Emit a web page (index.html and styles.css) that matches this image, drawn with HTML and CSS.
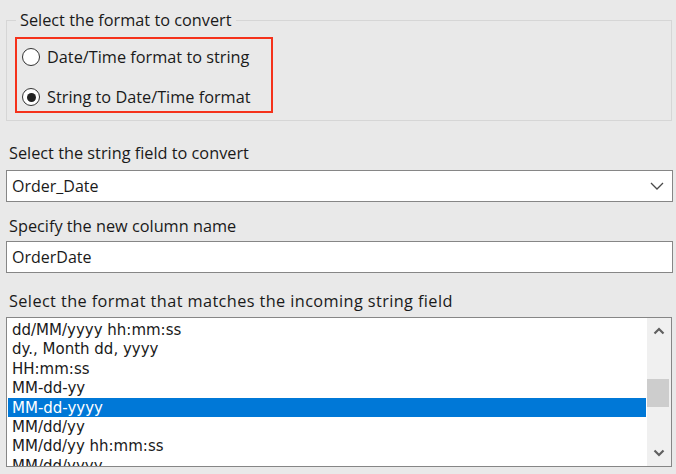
FILE: index.html
```html
<!DOCTYPE html>
<html>
<head>
<meta charset="utf-8">
<link rel="stylesheet" href="styles.css">
</head>
<body>
<div class="page">
  <fieldset class="group">
    <legend class="group-title">Select the format to convert</legend>
    <div class="highlight-box">
      <label class="radio-row">
        <span class="radio"></span>
        <span class="radio-text">Date/Time format to string</span>
      </label>
      <label class="radio-row">
        <span class="radio checked"><span class="dot"></span></span>
        <span class="radio-text">String to Date/Time format</span>
      </label>
    </div>
  </fieldset>

  <div class="label label-1">Select the string field to convert</div>
  <div class="combo">
    <span class="field-text">Order_Date</span>
    <svg class="chevron" width="14" height="8" viewBox="0 0 14 8"><path d="M1 1 L7 7 L13 1" fill="none" stroke="#4a4a4a" stroke-width="1.3"/></svg>
  </div>

  <div class="label label-2">Specify the new column name</div>
  <div class="textbox"><span class="field-text">OrderDate</span></div>

  <div class="label label-3">Select the format that matches the incoming string field</div>
  <div class="listbox">
    <div class="items">
      <div class="item">dd/MM/yyyy hh:mm:ss</div>
      <div class="item">dy., Month dd, yyyy</div>
      <div class="item">HH:mm:ss</div>
      <div class="item">MM-dd-yy</div>
      <div class="item selected">MM-dd-yyyy</div>
      <div class="item">MM/dd/yy</div>
      <div class="item">MM/dd/yy hh:mm:ss</div>
      <div class="item">MM/dd/yyyy</div>
    </div>
    <div class="scrollbar">
      <svg class="arrow" width="12" height="8" viewBox="0 0 12 8"><path d="M1.5 6.5 L6 2 L10.5 6.5" fill="none" stroke="#606060" stroke-width="2.2"/></svg>
      <div class="track"><div class="thumb"></div></div>
      <svg class="arrow" width="12" height="8" viewBox="0 0 12 8"><path d="M1.5 1.5 L6 6 L10.5 1.5" fill="none" stroke="#606060" stroke-width="2.2"/></svg>
    </div>
  </div>
</div>
</body>
</html>
```
FILE: styles.css
```css
html, body {
  margin: 0;
  padding: 0;
  background: #e9e9e9;
}
body {
  font-family: "Open Sans", "Noto Sans", sans-serif;
  font-size: 16.3px;
  color: #1a1a1a;
  width: 676px;
  height: 474px;
  overflow: hidden;
}
.page {
  padding: 11px 0 0 6px;
  width: 667px;
}
.group {
  margin: 0;
  width: 666px;
  box-sizing: border-box;
  border: 1px solid #d6d6d6;
  padding: 0 8px 7px 8px;
}
.group-title {
  margin-left: 1px;
  padding: 0 4px;
  line-height: 18px;
  height: 18px;
}
.highlight-box {
  margin-top: 8px;
  width: 258px;
  box-sizing: border-box;
  border: 2px solid #f5321b;
  padding: 8px 0 4px 5px;
  display: flex;
  flex-direction: column;
  gap: 20px;
}
.radio-row {
  display: flex;
  align-items: center;
  height: 20px;
  gap: 7px;
}
.radio {
  width: 16px;
  height: 16px;
  border: 1.5px solid #333;
  border-radius: 50%;
  background: #fff;
  display: flex;
  align-items: center;
  justify-content: center;
  flex: none;
}
.radio .dot {
  width: 9px;
  height: 9px;
  border-radius: 50%;
  background: #222;
}
.label {
  line-height: 20px;
  padding-left: 3px;
  white-space: nowrap;
}
.label-1 { margin-top: 22px; }
.label-2 { margin-top: 14px; }
.label-3 { margin-top: 18px; letter-spacing: 0.4px; }
.combo, .textbox {
  height: 32px;
  width: 667px;
  box-sizing: border-box;
  border: 1px solid #868686;
  background: #fff;
  display: flex;
  align-items: center;
  padding: 0 8px 0 5px;
}
.combo { margin-top: 7px; justify-content: space-between; }
.textbox { margin-top: 5px; }
.field-text {
  font-size: 16px;
}
.listbox {
  margin-top: 6px;
  height: 150px;
  width: 666px;
  box-sizing: border-box;
  border: 1px solid #868686;
  background: #fff;
  display: flex;
  overflow: hidden;
}
.items {
  flex: 1;
  padding: 2px 1px 0 1px;
  overflow: hidden;
}
.item {
  box-sizing: border-box;
  height: 19.4px;
  line-height: 17.4px;
  padding: 2px 0 0 4px;
  font-family: "DejaVu Sans", "Open Sans", sans-serif;
  font-size: 15px;
  white-space: nowrap;
}
.item.selected {
  background: #0078d7;
  color: #fff;
}
.scrollbar {
  width: 24px;
  background: #f0f0f0;
  display: flex;
  flex-direction: column;
  align-items: center;
  padding: 1px 0;
}
.arrow { flex: none; margin: 8px 0; }
.track {
  flex: 1;
  width: 100%;
}
.thumb {
  margin-top: 36px;
  width: 22px;
  height: 28px;
  background: #cdcdcd;
}
```
